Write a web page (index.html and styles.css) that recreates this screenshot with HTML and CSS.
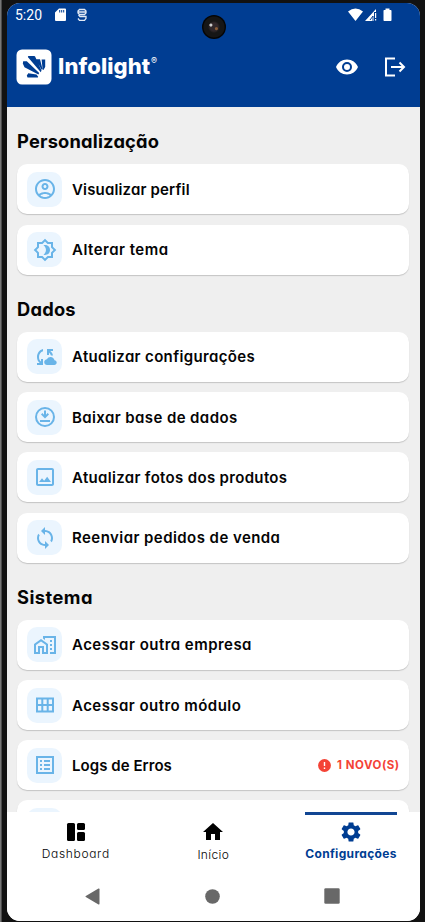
FILE: index.html
```
<!DOCTYPE html>
<html lang="pt-BR">
<head>
<meta charset="utf-8">
<title>Infolight</title>
<link rel="stylesheet" href="styles.css">
</head>
<body>
<div class="device">
<div class="screen">
  <header class="header">
    <div class="status">
      <span class="time">5:20</span>
      <svg class="sd" width="11" height="14" viewBox="0 0 11 14"><path fill="#fff" fill-rule="evenodd" d="M4 .5h6a1 1 0 0 1 1 1V12a1 1 0 0 1-1 1H1a1 1 0 0 1-1-1V4.500zM4.200 2v2.500h1V2zm2 0v2.500h1V2zm2 0v2.500h1V2z"/></svg>
      <svg class="app" width="10" height="14" viewBox="0 0 10 14"><path fill="none" stroke="#e2eaf5" stroke-width="1.300" d="M1 5V3l1.500-1.500h5L9 3v2L7.500 6.500h-5L1 5zM1 4h8M1.500 7 3 8.500h6v2L7.500 12.300h-5L1 10.500"/></svg>
      <svg class="signals" width="46" height="14" viewBox="0 0 46 14"><path fill="#fff" d="M0 3.500Q7.500-2.500 15 3.500L7.500 13zM17 13 28 1v3h-2v9zM27 5h1.200v5H27zm0 6h1.200v1.500H27zM37.500.5h4V2h1.200q.8 0 .8.800v9.400q0 .8-.8.800h-6.400q-.8 0-.8-.8V2.800q0-.8.800-.8h1.200z"/><path stroke="#003d92" d="m22 12 3-4v5" fill="none"/></svg>
    </div>
    <div class="brandbar">
      <svg class="logo" width="36" height="36" viewBox="0 0 36 36"><rect x=".5" y=".5" width="35" height="35" rx="5.500" fill="#fff"/><path fill="#003d92" d="M12.300 6.900h6l.8.600L25.500 21.500l-.7 1.700L11.800 8zM7.200 12.300h3.600L23.200 24l-.8 1.500L8.500 18.300 6.800 14.500zM20 10.300h4l2.400 9.500-.8 1zM25.600 10.500h3.600v7.500l-1.800 3h-.7zM12.300 24.300l8.200 1.200 1.700 2.200-.4.900H11.500l-.7-2z"/></svg>
      <span class="brand">Infolight</span><span class="reg">®</span>
      <svg class="eye" width="24" height="24" viewBox="0 0 24 24"><path fill="#fff" d="M12 4.500C7 4.500 2.730 7.610 1 12c1.730 4.390 6 7.500 11 7.500s9.270-3.110 11-7.500c-1.730-4.390-6-7.500-11-7.500zM12 17a5 5 0 1 1 0-10 5 5 0 0 1 0 10zm0-8a3 3 0 1 0 0 6 3 3 0 0 0 0-6z"/></svg>
      <svg class="exit" width="22" height="20" viewBox="0 0 22 20"><path fill="none" stroke="#fff" stroke-width="2" d="M11 1.500H2v17h9M7 10h13m-4.500-4.500L20 10l-4.500 4.500"/></svg>
    </div>
    <i class="camera"></i>
  </header>

  <main class="content">
    <section class="group">
      <h2 class="title t1">Personalização</h2>
      <div class="card"><span class="tile"><svg class="icon" viewBox="0 0 24 24"><path d="M12 2C6.480 2 2 6.480 2 12s4.480 10 10 10 10-4.480 10-10S17.520 2 12 2zM7.350 18.500C8.660 17.560 10.260 17 12 17s3.340.560 4.650 1.500C15.340 19.440 13.740 20 12 20s-3.340-.560-4.650-1.500zm10.790-1.380C16.450 15.800 14.320 15 12 15s-4.450.800-6.140 2.120C4.700 15.730 4 13.950 4 12c0-4.420 3.580-8 8-8s8 3.580 8 8c0 1.950-.700 3.730-1.860 5.120zM12 6c-1.930 0-3.500 1.570-3.500 3.500S10.070 13 12 13s3.500-1.570 3.500-3.500S13.930 6 12 6zm0 5c-.830 0-1.500-.670-1.500-1.500S11.170 8 12 8s1.500.670 1.500 1.500S12.830 11 12 11z"/></svg></span><span class="label l1">Visualizar perfil</span></div>
      <div class="card"><span class="tile"><svg class="icon" viewBox="0 0 24 24"><path d="M20 8.690V4h-4.690L12 .690 8.690 4H4v4.690L.690 12 4 15.310V20h4.690L12 23.310 15.310 20H20v-4.690L23.310 12 20 8.690zm-2 5.790V18h-3.520L12 20.480 9.520 18H6v-3.520L3.520 12 6 9.520V6h3.520L12 3.520 14.480 6H18v3.520L20.480 12 18 14.480z"/><path d="M10.500 7.300c3-.9 6.500 .9 6.500 4.700s-3.500 5.600-6.500 4.700c3.300-2.400 3.300-7 0-9.400z"/></svg></span><span class="label l2">Alterar tema</span></div>
    </section>
    <section class="group">
      <h2 class="title t2">Dados</h2>
      <div class="card"><span class="tile"><svg class="icon" viewBox="0 0 24 24"><path d="M10 4v2.200C7.500 7 6 9.200 6 12c0 2 .8 3.500 2 4.600V14h2v6H4v-2h2.700C5 16.500 4 14.500 4 12c0-4 2.600-7.200 6-8zM14 4h6v2h-2.700c1.500 1.300 2.400 2.700 2.700 4.500h-2.100c-.3-1.100-.9-2-1.900-2.900V10h-2zM21.500 15.200c-.4-1.900-2-3.200-3.900-3.200-1.600 0-2.900.9-3.600 2.300-1.500.1-2.800 1.300-2.800 2.900S12.500 20 14.100 20h7.200c1.300 0 2.400-1.100 2.400-2.400s-1-2.300-2.200-2.400z"/></svg></span><span class="label l3">Atualizar configurações</span></div>
      <div class="card"><span class="tile"><svg class="icon" viewBox="0 0 24 24"><path fill-rule="evenodd" d="M12 2a10 10 0 1 0 0 20 10 10 0 0 0 0-20zm0 2a8 8 0 1 1 0 16 8 8 0 0 1 0-16zM11 5.500h2v4.200l1.600-1.600L16 9.500l-4 4-4-4 1.400-1.400L11 9.700zM7 15h10v2H7z"/></svg></span><span class="label l4">Baixar base de dados</span></div>
      <div class="card"><span class="tile"><svg class="icon" viewBox="0 0 24 24"><path d="M19 5v14H5V5h14m0-2H5c-1.100 0-2 .900-2 2v14c0 1.100.900 2 2 2h14c1.100 0 2-.900 2-2V5c0-1.100-.900-2-2-2zm-4.860 8.860-3 3.870L9 13.140 6 17h12l-3.860-5.140z"/></svg></span><span class="label l5">Atualizar fotos dos produtos</span></div>
      <div class="card"><span class="tile"><svg class="icon" viewBox="0 0 24 24"><path d="M12 4V1L8 5l4 4V6c3.310 0 6 2.690 6 6 0 1.010-.250 1.970-.700 2.800l1.460 1.460C19.540 15.030 20 13.570 20 12c0-4.420-3.580-8-8-8zm0 14c-3.310 0-6-2.690-6-6 0-1.010.250-1.970.700-2.800L5.240 7.740C4.460 8.970 4 10.430 4 12c0 4.420 3.580 8 8 8v3l4-4-4-4v3z"/></svg></span><span class="label l6">Reenviar pedidos de venda</span></div>
    </section>
    <section class="group">
      <h2 class="title t3">Sistema</h2>
      <div class="card"><span class="tile"><svg class="icon" viewBox="0 0 24 24"><path d="M8 6 1 11v10h6v-6h2v6h6V11zm5 13h-2v-6H5v6H3v-7l5-3.500 5 3.500zM10 3v2.500l2 1.400V5h9v14h-4v2h6V3zM17 7h2v2h-2zm0 4h2v2h-2zm0 4h2v2h-2z"/></svg></span><span class="label l7">Acessar outra empresa</span></div>
      <div class="card"><span class="tile"><svg class="icon" viewBox="0 0 24 24"><path fill-rule="evenodd" d="M3 4.500h18v15H3zm2 2V11h3.300V6.500zm5.300 0V11h3.400V6.500zm5.400 0V11H19V6.500zM5 13v4.500h3.300V13zm5.300 0v4.500h3.400V13zm5.400 0v4.500H19V13z"/></svg></span><span class="label l8">Acessar outro módulo</span></div>
      <div class="card"><span class="tile"><svg class="icon" viewBox="0 0 24 24"><path fill-rule="evenodd" d="M3 3h18v18H3zm2 2v14h14V5zM7 7h2v2H7zm4 0h6v2h-6zM7 11h2v2H7zm4 0h6v2h-6zM7 15h2v2H7zm4 0h6v2h-6z"/></svg></span><span class="label l9">Logs de Erros</span>
        <span class="alert"><svg width="13" height="13" viewBox="0 0 13 13"><circle cx="6.500" cy="6.500" r="6.400" fill="#f44336"/><path d="M6.500 3v4M6.500 8.500V10" stroke="#fff" stroke-width="1.400"/></svg><b>1 NOVO(S)</b></span></div>
      <div class="card"><span class="tile"></span></div>
    </section>
  </main>

  <nav class="tabs">
    <div class="tab"><svg width="24" height="24" viewBox="0 0 24 24"><rect x="3" y="3" width="8" height="18" rx="1.500"/><rect x="13" y="3" width="8" height="7" rx="1.500"/><rect x="13" y="12" width="8" height="9" rx="1.500"/></svg><span class="tabname n1">Dashboard</span></div>
    <div class="tab"><svg width="24" height="24" viewBox="0 0 24 24"><path d="M10 20v-6h4v6h5v-8h3L12 3 2 12h3v8z"/></svg><span class="tabname n2">Início</span></div>
    <div class="tab active"><svg width="24" height="24" viewBox="0 0 24 24"><path d="M19.140 12.940c.040-.300.060-.610.060-.940 0-.320-.020-.640-.070-.940l2.030-1.580c.180-.140.230-.410.120-.610l-1.920-3.320c-.120-.220-.370-.290-.590-.220l-2.390.960c-.500-.380-1.030-.700-1.620-.940l-.360-2.540c-.040-.240-.240-.410-.480-.410h-3.840c-.240 0-.430.170-.470.410l-.360 2.540c-.590.240-1.130.570-1.620.940l-2.390-.960c-.220-.080-.470 0-.590.220L2.740 8.870c-.120.210-.080.470.120.610l2.030 1.580c-.050.300-.090.630-.090.940s.020.640.070.940l-2.030 1.580c-.180.140-.230.410-.120.610l1.920 3.320c.120.220.370.290.590.220l2.390-.960c.500.380 1.030.700 1.620.940l.360 2.540c.050.240.240.410.480.410h3.840c.240 0 .440-.170.470-.410l.360-2.540c.590-.240 1.130-.560 1.620-.940l2.390.960c.220.080.470 0 .590-.220l1.920-3.320c.120-.220.070-.470-.120-.610l-2.010-1.580zM12 15.600c-1.980 0-3.600-1.620-3.600-3.600s1.620-3.600 3.600-3.600 3.600 1.620 3.600 3.600-1.620 3.600-3.600 3.600z"/></svg><span class="tabname n3">Configurações</span></div>
  </nav>
  <div class="system">
    <svg width="15" height="17" viewBox="0 0 15 17"><path d="M13.500.5q1-.4 1 .7v14.600q0 1.100-1 .7L.8 9q-.8-.5 0-1z"/></svg>
    <svg width="15" height="15" viewBox="0 0 15 15"><circle cx="7.500" cy="7.500" r="7.300"/></svg>
    <svg width="16" height="16" viewBox="0 0 16 16"><rect x=".3" y=".3" width="15.400" height="15.400" rx="1.300"/></svg>
  </div>
</div>
</div>
</body>
</html>
```
FILE: styles.css
```
* { box-sizing: border-box; }
body { margin: 0; font-family: Inter, "Open Sans", sans-serif; font-feature-settings: "cv11"; color: #040404; }
svg { display: block; flex: none; }
.device { width: 425px; height: 922px; padding: 3px 5px 1px 7px; background: linear-gradient(90deg, #777 0 1px, #4b4b4b 1px 2px, #121212 2px); overflow: hidden; }
.screen { height: 918px; display: flex; flex-direction: column; border-radius: 13px; overflow: hidden; background: #efefef; }
.header { position: relative; flex: none; height: 104px; background: #003d92; color: #fff; }
.status { display: flex; align-items: center; height: 24px; padding: 0 26px 0 8px; }
.time { width: 27px; font: 14px/25px Roboto, sans-serif; }
.sd { margin-left: 13px; }
.app { margin-left: 11px; }
.signals { margin-left: auto; }
.brandbar { display: flex; align-items: center; height: 36px; margin-top: 22px; padding: 0 14px 0 9px; }
.logo { margin-top: -1px; }
.brand { margin: -2px 0 0 6px; width: 93px; font-size: 22px; font-weight: 800; line-height: 36px; letter-spacing: .1px; }
.reg { margin: -13px 0 0 0; font-size: 9px; line-height: 10px; }
.eye { margin-left: auto; }
.exit { margin-left: 25px; }
.camera { position: absolute; left: 195px; top: 12px; width: 24px; height: 24px; border-radius: 50%; background: radial-gradient(circle at 37% 42%, #ccc 0 1px, transparent 2px), radial-gradient(circle at 60% 57%, #8a5c35 0 1px, transparent 2px), radial-gradient(circle, #30272a 0 4px, #161616 6px 10px, #050505 11px); }
.content { flex: 1; min-height: 0; overflow: hidden; padding: 19px 11px 0 10px; }
.group { display: grid; gap: 10.200px; margin-bottom: 19px; }
.title { margin: 0 0 -1.800px; font-size: 18.300px; line-height: 30px; font-weight: 700; white-space: nowrap; }
.t1 { letter-spacing: .2px; }
.t2 { letter-spacing: .22px; }
.t3 { letter-spacing: .46px; }
.card { display: flex; align-items: center; height: 50px; padding: 0 10px; border-radius: 10px; background: #fff; box-shadow: 0 1px 1px #c4c4c4; }
.tile { display: grid; place-items: center; width: 35px; height: 35px; border-radius: 10px; background: #ebf5fe; }
.icon { width: 24px; height: 24px; fill: #69b4e8; }
.label { margin-left: 10px; font-size: 15px; font-weight: 590; white-space: nowrap; }
.l1 { letter-spacing: .16px; }
.l2 { letter-spacing: .49px; }
.l3 { letter-spacing: .35px; }
.l4 { letter-spacing: .4px; }
.l5 { letter-spacing: .33px; }
.l6 { letter-spacing: .44px; }
.l7 { letter-spacing: .47px; }
.l8 { letter-spacing: .45px; }
.l9 { letter-spacing: .05px; }
.alert { display: flex; align-items: center; gap: 6px; margin-left: auto; color: #f44336; font-size: 11.500px; }
.alert b { width: 62px; letter-spacing: .52px; white-space: nowrap; }
.tabs { flex: none; height: 59px; display: flex; background: #fff; }
.tab { flex: 1; display: flex; flex-direction: column; align-items: center; padding-top: 8px; }
.tabname { margin-top: 1px; font-size: 12px; line-height: 18px; font-weight: 300; }
.n1 { letter-spacing: .68px; }
.n2 { margin-top: 2px; letter-spacing: .35px; }
.n3 { letter-spacing: .32px; }
.active { margin: 0 23px; flex: none; width: 92px; padding-top: 5px; border-top: 3px solid #114693; color: #003d92; fill: #003d92; }
.active .tabname { font-weight: 700; }
.system { flex: none; height: 50px; display: flex; align-items: center; background: #fff; fill: #686868; padding: 0 80px 0 78px; justify-content: space-between; }
```
